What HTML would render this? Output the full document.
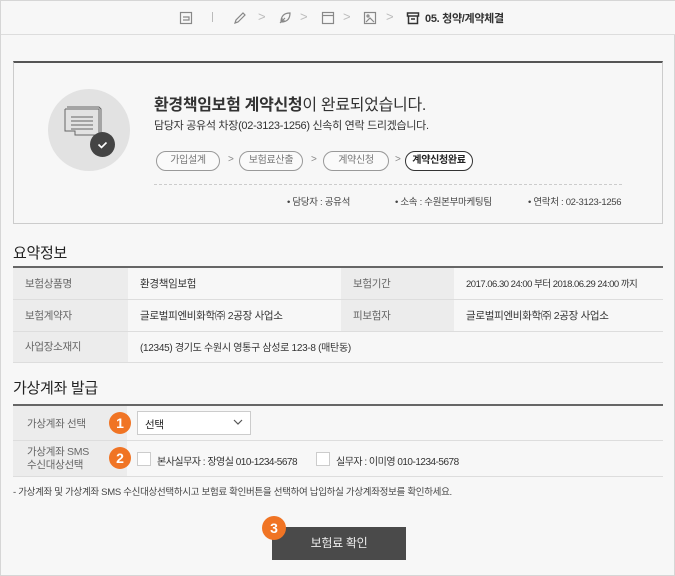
<!DOCTYPE html>
<html><head><meta charset="utf-8"><style>
*{box-sizing:border-box;margin:0;padding:0}
body{width:675px;height:576px;background:#f7f7f7;font-family:"Liberation Sans","Noto Sans CJK KR",sans-serif;color:#333;position:relative;overflow:hidden;border:1px solid #d6d6d6;letter-spacing:-0.3px}
.abs{position:absolute}
.top{left:0;top:0;width:675px;height:34px;border-bottom:1px solid #ddd;background:#f7f7f7}
.t{white-space:nowrap}
.box{left:12px;top:60px;width:650px;height:163px;border:1px solid #ccc;border-top:2px solid #555;background:#f7f7f7}
.pill{position:absolute;top:150px;height:20px;border:1px solid #999;border-radius:10px;font-size:10px;color:#777;text-align:center;line-height:18px;background:#fafafa;white-space:nowrap}
.tbl td{font-size:10.5px;padding-left:12px;border-bottom:1px solid #ddd;white-space:nowrap}
.lab{background:#ececec;color:#666}
.badge{position:absolute;width:22px;height:22px;border-radius:50%;background:#f07424;color:#fff;font-weight:bold;font-size:14px;text-align:center;line-height:22px;letter-spacing:0}
.cb{position:absolute;width:14px;height:14px;border:1px solid #ccc;background:#fff}
</style></head><body>
<div class="abs top">
<svg class="abs" style="left:178px;top:10px" width="14" height="14" viewBox="0 0 14 14" fill="none" stroke="#888" stroke-width="1.2"><rect x="1.5" y="1.5" width="11" height="11"/><path d="M4 6h6v3H4"/></svg>
<div class="abs" style="left:211px;top:11px;width:1px;height:10px;background:#bbb"></div>
<svg class="abs" style="left:232px;top:10px" width="14" height="14" viewBox="0 0 14 14" fill="none" stroke="#888" stroke-width="1.2"><path d="M2 12l1-3 7-7 2 2-7 7z"/></svg>
<span class="abs t" style="left:257px;top:8px;color:#bbb;font-size:13px">&gt;</span>
<svg class="abs" style="left:277px;top:10px" width="14" height="14" viewBox="0 0 14 14" fill="none" stroke="#888" stroke-width="1.2"><path d="M3 11c0-6 3-9 9-9 0 6-3 9-9 9zM2 12l5-5M4 7v3h3"/></svg>
<span class="abs t" style="left:299px;top:8px;color:#bbb;font-size:13px">&gt;</span>
<svg class="abs" style="left:320px;top:10px" width="14" height="14" viewBox="0 0 14 14" fill="none" stroke="#888" stroke-width="1.2"><rect x="1.5" y="1.5" width="11" height="11"/><path d="M1.5 4.5h11"/></svg>
<span class="abs t" style="left:342px;top:8px;color:#bbb;font-size:13px">&gt;</span>
<svg class="abs" style="left:362px;top:10px" width="14" height="14" viewBox="0 0 14 14" fill="none" stroke="#888" stroke-width="1.2"><rect x="1.5" y="1.5" width="11" height="11"/><path d="M3 11l4-4 4 4"/><circle cx="5" cy="5" r="1"/></svg>
<span class="abs t" style="left:385px;top:8px;color:#bbb;font-size:13px">&gt;</span>
<svg class="abs" style="left:405px;top:10px" width="14" height="14" viewBox="0 0 14 14" fill="none" stroke="#333" stroke-width="1.5"><path d="M1.5 2h11v3h-11zM2.5 5v7.5h9V5M5 8h4"/></svg>
<span class="abs t" style="left:424px;top:9px;font-size:11px;font-weight:bold;color:#333">05. 청약/계약체결</span>
</div>

<div class="abs box"></div>
<div class="abs" style="left:47px;top:88px;width:82px;height:82px;border-radius:50%;background:#e2e2e2"></div>
<svg class="abs" style="left:62px;top:104px" width="56" height="50" viewBox="0 0 56 50" fill="none" stroke="#666" stroke-width="1"><path d="M4 2h32l2 2v26M2 4h34v26M2 4v22h10v4h24"/><path d="M8 12h22M8 16h22M8 20h22M8 24h22"/></svg>
<div class="abs" style="left:89px;top:131px;width:25px;height:25px;border-radius:50%;background:#444"></div>
<svg class="abs" style="left:89px;top:131px" width="25" height="25" viewBox="0 0 25 25" fill="none" stroke="#fff" stroke-width="1.6"><path d="M8.5 12.5l3 3 5-5"/></svg>
<div class="abs t" style="left:153px;top:90px;font-size:16px;color:#333"><b>환경책임보험 계약신청</b>이 완료되었습니다.</div>
<div class="abs t" style="left:153px;top:116px;font-size:11px;color:#333">담당자 공유석 차장(02-3123-1256) 신속히 연락 드리겠습니다.</div>
<div class="pill" style="left:155px;width:64px">가입설계</div>
<span class="abs t" style="left:227px;top:153px;font-size:10px;color:#888">&gt;</span>
<div class="pill" style="left:238px;width:64px">보험료산출</div>
<span class="abs t" style="left:310px;top:153px;font-size:10px;color:#888">&gt;</span>
<div class="pill" style="left:322px;width:66px">계약신청</div>
<span class="abs t" style="left:394px;top:153px;font-size:10px;color:#888">&gt;</span>
<div class="pill" style="left:404px;width:68px;border:1.5px solid #333;color:#222;font-weight:bold;background:#fff">계약신청완료</div>
<div class="abs" style="left:153px;top:183px;width:468px;border-top:1px dashed #ccc"></div>
<div class="abs t" style="left:286px;top:193px;font-size:9.5px;color:#444">• 담당자 : 공유석</div>
<div class="abs t" style="left:394px;top:193px;font-size:9.5px;color:#444">• 소속 : 수원본부마케팅팀</div>
<div class="abs t" style="left:527px;top:193px;font-size:9.5px;color:#444">• 연락처 : 02-3123-1256</div>

<div class="abs t" style="left:12px;top:241px;font-size:15px;color:#222">요약정보</div>
<table class="abs tbl" style="left:12px;top:265px;width:650px;border-collapse:collapse;border-top:2px solid #666;table-layout:fixed">
<tr style="height:32px"><td class="lab" style="width:115px">보험상품명</td><td style="width:213px">환경책임보험</td><td class="lab" style="width:113px">보험기간</td><td style="font-size:9.5px;letter-spacing:-0.5px">2017.06.30 24:00 부터 2018.06.29 24:00 까지</td></tr>
<tr style="height:32px"><td class="lab">보험계약자</td><td>글로벌피엔비화학㈜ 2공장 사업소</td><td class="lab">피보험자</td><td>글로벌피엔비화학㈜ 2공장 사업소</td></tr>
<tr style="height:31px"><td class="lab">사업장소재지</td><td colspan="3" style="font-size:10px">(12345) 경기도 수원시 영통구 삼성로 123-8 (매탄동)</td></tr>
</table>

<div class="abs t" style="left:12px;top:376px;font-size:15px;color:#222">가상계좌 발급</div>
<div class="abs" style="left:12px;top:403px;width:650px;border-top:2px solid #666"></div>
<div class="abs lab" style="left:12px;top:405px;width:114px;height:70px"></div>
<div class="abs" style="left:12px;top:439px;width:650px;border-top:1px solid #ddd"></div>
<div class="abs" style="left:12px;top:475px;width:650px;border-top:1px solid #ddd"></div>
<div class="abs t" style="left:26px;top:415px;font-size:10.5px;color:#666">가상계좌 선택</div>
<div class="abs t" style="left:26px;top:445px;font-size:10.5px;color:#666;line-height:13px">가상계좌 SMS<br>수신대상선택</div>
<div class="badge" style="left:108px;top:411px">1</div>
<div class="badge" style="left:108px;top:446px">2</div>
<div class="abs" style="left:136px;top:410px;width:114px;height:24px;border:1px solid #ccc;background:#fff"></div>
<div class="abs t" style="left:144px;top:416px;font-size:10.5px;color:#222">선택</div>
<svg class="abs" style="left:232px;top:418px" width="10" height="7" viewBox="0 0 10 7" fill="none" stroke="#555" stroke-width="1.2"><path d="M1 1l4 4 4-4"/></svg>
<div class="cb" style="left:136px;top:451px"></div>
<div class="abs t" style="left:156px;top:452px;font-size:10px;color:#333;letter-spacing:-0.5px">본사실무자 : 장영실 010-1234-5678</div>
<div class="cb" style="left:315px;top:451px"></div>
<div class="abs t" style="left:335px;top:452px;font-size:10px;color:#333;letter-spacing:-0.5px">실무자 : 이미영 010-1234-5678</div>
<div class="abs t" style="left:12px;top:483px;font-size:9.5px;color:#444">- 가상계좌 및 가상계좌 SMS 수신대상선택하시고 보험료 확인버튼을 선택하여 납입하실 가상계좌정보를 확인하세요.</div>

<div class="abs" style="left:271px;top:526px;width:134px;height:33px;background:#4a4a4a;color:#eee;font-size:12px;text-align:center;line-height:33px">보험료 확인</div>
<div class="badge" style="left:261px;top:515px;width:24px;height:24px;line-height:24px">3</div>
</body></html>
